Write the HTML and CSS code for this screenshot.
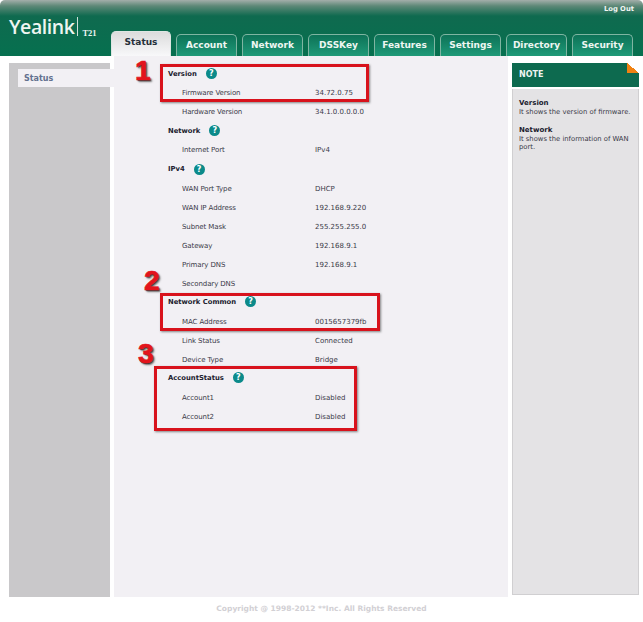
FILE: index.html
```html
<!DOCTYPE html>
<html lang="en">
<head>
<meta charset="utf-8">
<title>Yealink T21 Status</title>
<link rel="stylesheet" href="styles.css">
</head>
<body>
<div class="page">
  <header class="header">
    <div class="logo"><span class="logo-name">Yealink</span><span class="logo-model">T21</span></div>
    <div class="header-right">
      <a class="logout">Log Out</a>
      <nav class="tabs">
        <a class="tab active">Status</a>
        <a class="tab">Account</a>
        <a class="tab">Network</a>
        <a class="tab">DSSKey</a>
        <a class="tab">Features</a>
        <a class="tab">Settings</a>
        <a class="tab">Directory</a>
        <a class="tab">Security</a>
      </nav>
    </div>
  </header>
  <main class="main">
    <aside class="side"><div class="side-item">Status</div></aside>
    <section class="content">
      <div class="row head"><span>Version</span><i class="help">?</i></div>
      <div class="row"><span class="label">Firmware Version</span><span>34.72.0.75</span></div>
      <div class="row"><span class="label">Hardware Version</span><span>34.1.0.0.0.0.0</span></div>
      <div class="row head"><span>Network</span><i class="help">?</i></div>
      <div class="row"><span class="label">Internet Port</span><span>IPv4</span></div>
      <div class="row head tall"><span>IPv4</span><i class="help">?</i></div>
      <div class="row"><span class="label">WAN Port Type</span><span>DHCP</span></div>
      <div class="row"><span class="label">WAN IP Address</span><span>192.168.9.220</span></div>
      <div class="row"><span class="label">Subnet Mask</span><span>255.255.255.0</span></div>
      <div class="row"><span class="label">Gateway</span><span>192.168.9.1</span></div>
      <div class="row"><span class="label">Primary DNS</span><span>192.168.9.1</span></div>
      <div class="row"><span class="label">Secondary DNS</span><span></span></div>
      <div class="row head raised"><span>Network Common</span><i class="help">?</i></div>
      <div class="row"><span class="label">MAC Address</span><span>0015657379fb</span></div>
      <div class="row"><span class="label">Link Status</span><span>Connected</span></div>
      <div class="row"><span class="label">Device Type</span><span>Bridge</span></div>
      <div class="row head raised"><span>AccountStatus</span><i class="help">?</i></div>
      <div class="row"><span class="label">Account1</span><span>Disabled</span></div>
      <div class="row"><span class="label">Account2</span><span>Disabled</span></div>
      <div class="mark mark-a"></div>
      <div class="mark mark-b"></div>
      <div class="mark mark-c"></div>
      <b class="num num-a">1</b>
      <b class="num num-b">2</b>
      <b class="num num-c">3</b>
    </section>
    <aside class="note">
      <h2 class="note-title">NOTE</h2>
      <div class="note-body">
        <p><strong>Version</strong><br>It shows the version of firmware.</p>
        <p><strong>Network</strong><br>It shows the information of WAN port.</p>
      </div>
    </aside>
  </main>
  <footer class="footer">Copyright @ 1998-2012 **Inc. All Rights Reserved</footer>
</div>
</body>
</html>
```

FILE: styles.css
```css
* { box-sizing: border-box; }
html, body { margin: 0; padding: 0; background: #fff; }
body { font-family: "DejaVu Sans", sans-serif; font-size: 7px; color: #3a3a48; }
.page { width: 643px; height: 622px; overflow: hidden; }

.header {
  height: 56px;
  display: flex;
  justify-content: space-between;
  border-radius: 5px 5px 0 0;
  background: linear-gradient(#a3aeaa 0, #5d8877 6px, #0f6a4f 16px, #06704f 100%);
}
.logo { padding: 17px 0 0 9px; display: flex; align-items: flex-start; color: #eef5f1; }
.logo-name { font-family: "Open Sans", sans-serif; font-weight: 600; font-size: 19.5px; letter-spacing: -0.45px; border-right: 1px solid #cfe0d8; padding-right: 3px; height: 19px; line-height: 19px; margin-right: 4px; }
.logo-model { font-family: "Liberation Serif", serif; font-weight: bold; font-size: 8.5px; line-height: 10px; margin-top: 11px; }

.header-right { display: flex; flex-direction: column; align-items: flex-end; }
.logout { font-size: 6.8px; font-weight: bold; color: #f3f6f4; line-height: 10px; padding: 4px 9px 0 0; }
.tabs { display: flex; align-items: flex-end; gap: 5px; margin-top: 17px; padding-right: 10px; }
.tab {
  width: 61px;
  height: 22px;
  display: flex;
  align-items: center;
  justify-content: center;
  padding-bottom: 1px;
  font-size: 9px;
  font-weight: bold;
  color: #eef6f2;
  background: linear-gradient(#0d7257, #1f9a78);
  border: 1px solid #7fb5a2;
  border-bottom: 0;
  border-radius: 5px 5px 0 0;
}
.tab.active {
  width: 60px;
  height: 25px;
  color: #26303a;
  background: linear-gradient(#dcdcdc, #f8f8fa);
  border-color: #dfe6e3;
  padding-bottom: 4px;
}

.main { display: flex; height: 541px; }
.side { width: 101px; margin: 7px 0 0 9px; background: #c9c8ca; padding-top: 6px; padding-left: 9px; position: relative; z-index: 1; }
.side-item {
  width: 96px;
  height: 18px;
  padding: 1px 0 0 6px;
  background: #f2f0f4;
  color: #63718f;
  font-weight: bold;
  line-height: 18px;
  font-size: 8px;
}
.content { width: 394px; margin-left: 4px; background: #f2f0f4; padding: 8px 0 0 54px; position: relative; }
.row { height: 19px; display: flex; align-items: center; }
.row.tall { height: 20px; }
.row.raised { padding-bottom: 2px; }
.row.head { font-weight: bold; font-size: 6.8px; color: #20202e; }
.label { width: 133px; margin-left: 14px; letter-spacing: -0.1px; }
.help {
  width: 11px;
  height: 11px;
  margin-left: 9px;
  border-radius: 50%;
  background: #0b8a8a;
  color: #fff;
  font-style: normal;
  font-weight: bold;
  font-size: 8px;
  line-height: 11px;
  text-align: center;
}

.mark { position: absolute; border: 3px solid #d8121c; box-shadow: 1px 1px 2px rgba(60,60,60,.6); }
.mark-a { left: 46px; top: 8px; width: 209px; height: 38px; }
.mark-b { left: 46px; top: 237px; width: 220px; height: 38px; }
.mark-c { left: 40px; top: 310px; width: 203px; height: 65px; }
.num {
  position: absolute;
  font-family: "Liberation Sans", sans-serif;
  font-weight: bold;
  font-size: 28px;
  line-height: 28px;
  color: #e3141c;
  -webkit-text-stroke: 0.6px #e3141c;
  text-shadow: 1px 1px 1px #333, 2px 2px 2px #777;
}
.num-a { left: 21px; top: 1px; }
.num-b { left: 30px; top: 211px; }
.num-c { left: 24px; top: 284px; }

.note { width: 127px; margin: 7px 0 0 4px; display: flex; flex-direction: column; height: 532px; }
.note-title {
  position: relative;
  margin: 0;
  height: 24px;
  padding-left: 7px;
  background: #0d6a4f;
  color: #eef5f1;
  font-size: 8px;
  line-height: 24px;
  font-weight: bold;
}
.note-title::after {
  content: "";
  position: absolute;
  right: 0;
  top: 0;
  width: 12px;
  height: 10px;
  background: linear-gradient(to top right, #f08212 50%, #fff 50%);
}
.note-body {
  flex: 1;
  margin-top: 2px;
  background: #e4e3e5;
  border: 1px solid #d0cfd1;
  border-top: 0;
  padding: 10px 6px;
  font-size: 6.8px;
  line-height: 8.5px;
}
.note-body p { margin: 0 0 10px; }
.note-body strong { color: #20202e; font-size: 7px; }

.footer { padding-top: 6px; text-align: center; font-size: 7.5px; line-height: 11px; font-weight: bold; color: #d2d0d4; }
```
